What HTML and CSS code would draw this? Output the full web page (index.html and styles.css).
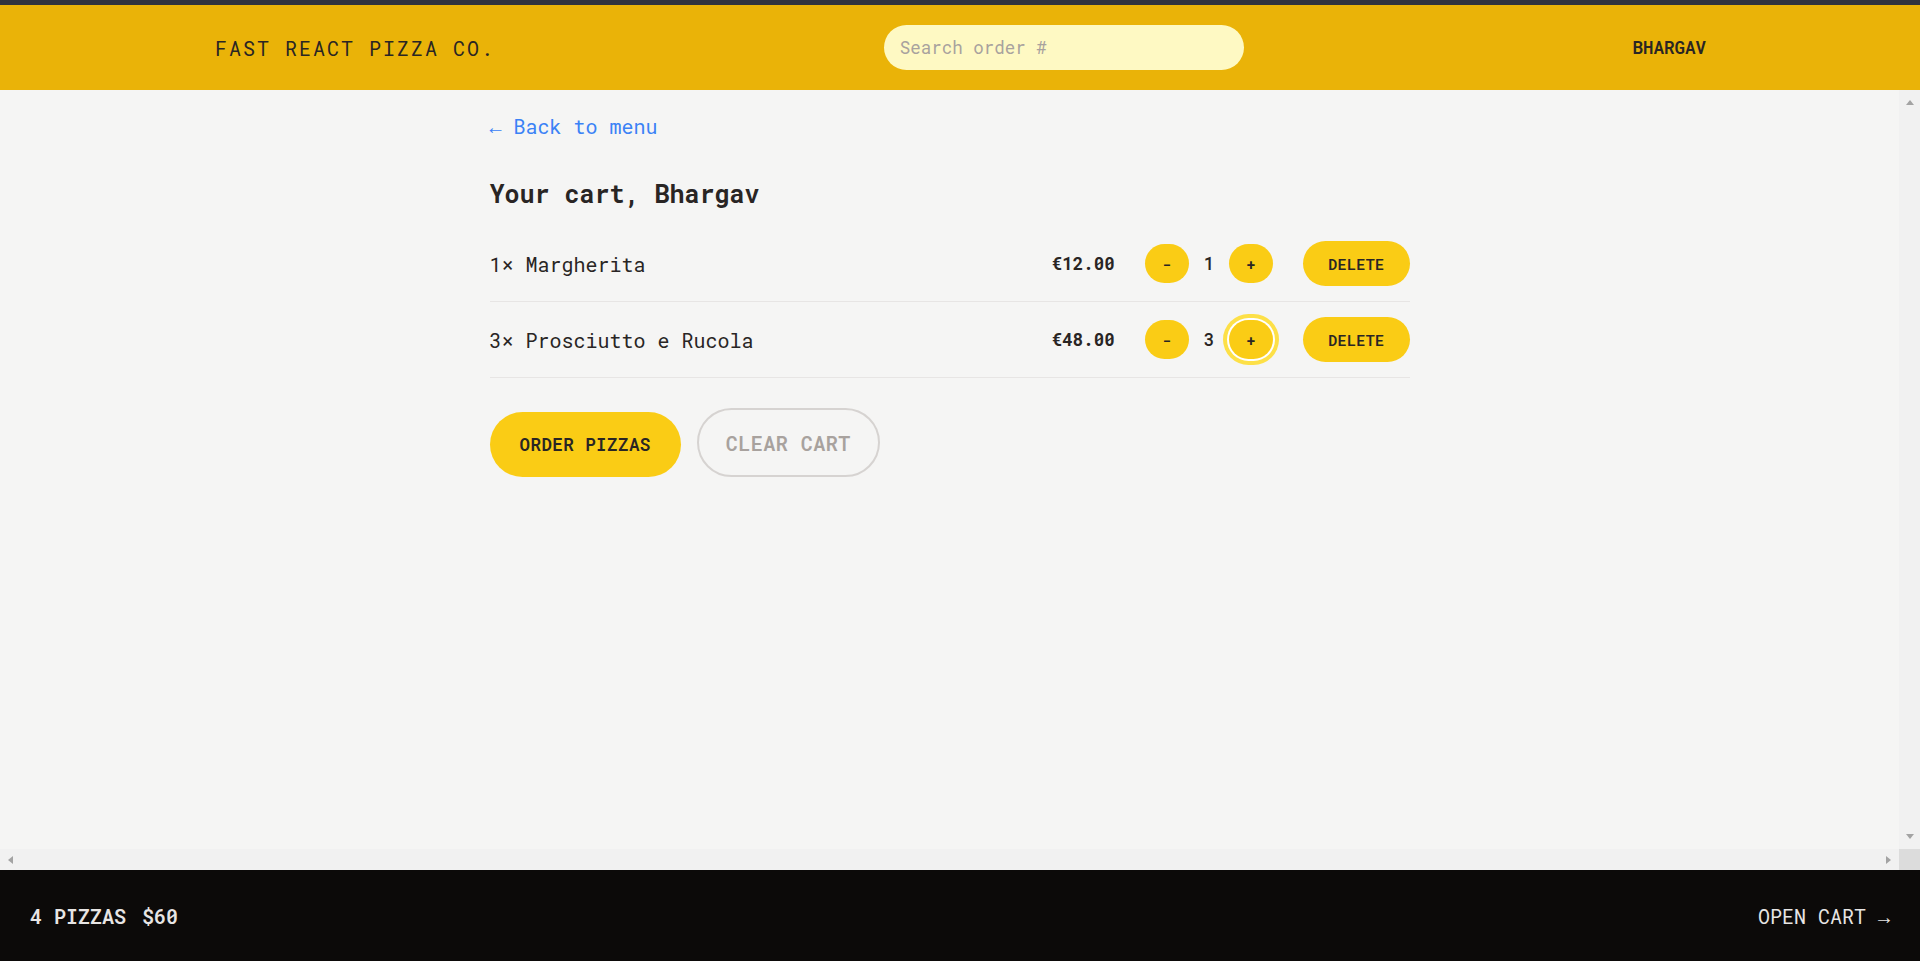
FILE: index.html
```html
<!DOCTYPE html>
<html lang="en">
<head>
<meta charset="utf-8">
<title>Fast React Pizza Co.</title>
<link rel="stylesheet" href="styles.css">
</head>
<body>
<div class="app">
  <header class="header">
    <a class="logo" href="#">Fast React Pizza Co.</a>
    <form class="search">
      <input class="search-input" type="text" placeholder="Search order #">
    </form>
    <div class="username">Bhargav</div>
  </header>

  <div class="viewport">
    <div class="main-scroll">
      <main class="container">
        <a class="back-link" href="#">&larr; Back to menu</a>
        <h2 class="cart-title">Your cart, Bhargav</h2>

        <ul class="cart-list">
          <li class="cart-item">
            <p class="item-name">1&times; Margherita</p>
            <div class="item-actions">
              <p class="item-price">€12.00</p>
              <div class="qty">
                <button class="btn-round" type="button">-</button>
                <span class="qty-value">1</span>
                <button class="btn-round" type="button">+</button>
              </div>
              <button class="btn-small" type="button">Delete</button>
            </div>
          </li>
          <li class="cart-item">
            <p class="item-name">3&times; Prosciutto e Rucola</p>
            <div class="item-actions">
              <p class="item-price">€48.00</p>
              <div class="qty">
                <button class="btn-round" type="button">-</button>
                <span class="qty-value">3</span>
                <button class="btn-round is-focused" type="button">+</button>
              </div>
              <button class="btn-small" type="button">Delete</button>
            </div>
          </li>
        </ul>

        <div class="cart-actions">
          <a class="btn-primary" href="#">Order pizzas</a>
          <button class="btn-secondary" type="button">Clear cart</button>
        </div>
      </main>
    </div>
    <div class="vbar" aria-hidden="true">
      <span class="arrow arrow-up"></span>
      <span class="arrow arrow-down"></span>
    </div>
    <div class="hbar" aria-hidden="true">
      <span class="arrow arrow-left"></span>
      <span class="arrow arrow-right"></span>
    </div>
    <div class="corner" aria-hidden="true"></div>
  </div>

  <footer class="cart-overview">
    <p class="overview-summary">
      <span>4 pizzas</span>
      <span>$60</span>
    </p>
    <a class="open-cart" href="#">Open cart &rarr;</a>
  </footer>
</div>
</body>
</html>
```

FILE: styles.css
```css
* {
  box-sizing: border-box;
}

html, body {
  margin: 0;
  padding: 0;
}

body {
  font-family: "Roboto Mono", "Liberation Mono", "DejaVu Sans Mono", monospace;
  color: #292524;
  background: #f5f5f4;
}

a {
  text-decoration: none;
  color: inherit;
}

p, h2, ul {
  margin: 0;
  padding: 0;
}

ul {
  list-style: none;
}

button, input {
  font-family: inherit;
}

.app {
  height: 100vh;
  display: grid;
  grid-template-rows: auto 1fr auto;
  border-top: 5px solid #31333e;
}

/* Header */
.header {
  display: flex;
  align-items: center;
  justify-content: space-between;
  padding: 20px 214px 20px 215px;
  background: #eab308;
  text-transform: uppercase;
}

.logo {
  font-size: 20px;
  line-height: 30px;
  letter-spacing: 0.1em;
  color: #292524;
}

.search {
  margin: 0;
}

.search-input {
  display: block;
  width: 360px;
  height: 45px;
  border: none;
  outline: none;
  border-radius: 9999px;
  background: #fef9c3;
  padding: 0 16px;
  font-size: 17.5px;
  color: #292524;
}

.search-input::placeholder {
  color: #a8a29e;
}

.username {
  font-size: 17.5px;
  line-height: 25px;
  font-weight: 600;
  color: #292524;
}

/* Main scroll area with scrollbars */
.viewport {
  display: grid;
  grid-template-columns: 1fr 21px;
  grid-template-rows: 1fr 21px;
  min-height: 0;
}

.main-scroll {
  overflow: hidden;
  min-height: 0;
}

.vbar {
  background: #f1f1f1;
  display: flex;
  flex-direction: column;
  align-items: center;
  justify-content: space-between;
  padding: 10px 0;
}

.hbar {
  background: #f1f1f1;
  display: flex;
  align-items: center;
  justify-content: space-between;
  padding: 0 8px;
}

.corner {
  background: #dcdcdc;
}

.arrow {
  display: block;
  width: 0;
  height: 0;
}

.arrow-up {
  border-left: 4.5px solid transparent;
  border-right: 4.5px solid transparent;
  border-bottom: 5px solid #a3a3a3;
}

.arrow-down {
  border-left: 4.5px solid transparent;
  border-right: 4.5px solid transparent;
  border-top: 5px solid #a3a3a3;
}

.arrow-left {
  border-top: 4.5px solid transparent;
  border-bottom: 4.5px solid transparent;
  border-right: 5px solid #a3a3a3;
}

.arrow-right {
  border-top: 4.5px solid transparent;
  border-bottom: 4.5px solid transparent;
  border-left: 5px solid #a3a3a3;
}

.container {
  max-width: 960px;
  margin: 0 auto;
  padding: 22px 20px 20px;
}

.back-link {
  display: inline-block;
  font-size: 20px;
  line-height: 28px;
  color: #3b82f6;
}

.cart-title {
  margin-top: 36px;
  font-size: 25px;
  line-height: 35px;
  font-weight: 700;
}

.cart-list {
  margin-top: 15px;
  border-bottom: 1px solid #e7e5e4;
}

.cart-item {
  display: flex;
  align-items: center;
  justify-content: space-between;
  padding: 15px 0;
}

.cart-item + .cart-item {
  border-top: 1px solid #e7e5e4;
}

.item-name {
  font-size: 20px;
  line-height: 30px;
}

.item-actions {
  display: flex;
  align-items: center;
  gap: 30px;
}

.item-price {
  font-size: 17.5px;
  line-height: 25px;
  font-weight: 700;
}

.qty {
  display: flex;
  align-items: center;
  gap: 15px;
}

.qty-value {
  font-size: 17.5px;
  line-height: 25px;
  font-weight: 500;
}

.btn-round,
.btn-small,
.btn-primary,
.btn-secondary {
  display: inline-block;
  border: none;
  border-radius: 9999px;
  background: #facc15;
  color: #292524;
  font-weight: 600;
  text-transform: uppercase;
  letter-spacing: 0.025em;
  cursor: pointer;
}

.btn-round {
  width: 44px;
  height: 39px;
  padding: 0;
  font-size: 15px;
  line-height: 20px;
}

.btn-round.is-focused {
  box-shadow: 0 0 0 2px #ffffff, 0 0 0 6px #fde047;
}

.btn-small {
  padding: 12.5px 25px;
  font-size: 15px;
  line-height: 20px;
}

.cart-actions {
  display: flex;
  align-items: flex-end;
  gap: 16px;
  margin-top: 30px;
}

.btn-primary {
  padding: 20px 30px;
  font-size: 17.5px;
  line-height: 25px;
}

.btn-secondary {
  background: transparent;
  border: 2px solid #d6d3d1;
  color: #a8a29e;
  padding: 17.5px 27px;
  font-size: 20px;
  line-height: 30px;
}

/* Footer */
.cart-overview {
  display: flex;
  align-items: center;
  justify-content: space-between;
  padding: 31px 30px 30px;
  background: #0c0a09;
  color: #e7e5e4;
  text-transform: uppercase;
  font-size: 20px;
  line-height: 30px;
}

.overview-summary {
  display: flex;
  gap: 16px;
  font-weight: 600;
}

.open-cart {
  color: #e7e5e4;
}
```
